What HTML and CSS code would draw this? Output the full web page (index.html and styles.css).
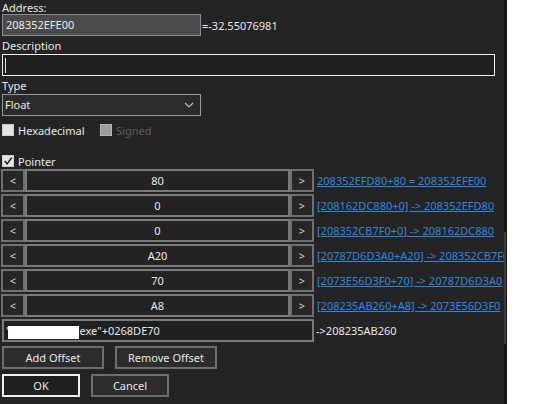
FILE: index.html
```html
<!DOCTYPE html>
<html>
<head>
<meta charset="utf-8">
<link rel="stylesheet" href="styles.css">
</head>
<body>
<div class="app">
  <div class="panel">
    <div class="label first">Address:</div>
    <div class="addr-row">
      <div class="field addr">208352EFE00</div>
      <span class="val">=-32.55076981</span>
    </div>
    <div class="label">Description</div>
    <div class="field desc"><span class="caret"></span></div>
    <div class="label">Type</div>
    <div class="field select">
      <span>Float</span>
      <svg class="chev" width="10" height="6" viewBox="0 0 10 6"><polyline points="1,1 5,5 9,1" fill="none" stroke="#bdbdbd" stroke-width="1.2"/></svg>
    </div>
    <div class="checks">
      <label class="check"><span class="box"></span>Hexadecimal</label>
      <label class="check disabled"><span class="box"></span>Signed</label>
    </div>
    <label class="check pointer"><span class="box checked"><svg width="12" height="12" viewBox="0 0 12 12"><polyline points="2,6 5,9.5 10.5,2" fill="none" stroke="#1a1a1a" stroke-width="1.8"/></svg></span>Pointer</label>
    <div class="offsets">
      <div class="orow"><div class="obtn">&lt;</div><div class="oval">80</div><div class="obtn">&gt;</div><a class="olink">208352EFD80+80 = 208352EFE00</a></div>
      <div class="orow"><div class="obtn">&lt;</div><div class="oval">0</div><div class="obtn">&gt;</div><a class="olink">[208162DC880+0] -&gt; 208352EFD80</a></div>
      <div class="orow"><div class="obtn">&lt;</div><div class="oval">0</div><div class="obtn">&gt;</div><a class="olink">[208352CB7F0+0] -&gt; 208162DC880</a></div>
      <div class="orow"><div class="obtn">&lt;</div><div class="oval">A20</div><div class="obtn">&gt;</div><a class="olink">[20787D6D3A0+A20] -&gt; 208352CB7F0</a></div>
      <div class="orow"><div class="obtn">&lt;</div><div class="oval">70</div><div class="obtn">&gt;</div><a class="olink">[2073E56D3F0+70] -&gt; 20787D6D3A0</a></div>
      <div class="orow"><div class="obtn">&lt;</div><div class="oval">A8</div><div class="obtn">&gt;</div><a class="olink">[208235AB260+A8] -&gt; 2073E56D3F0</a></div>
    </div>
    <div class="base-row">
      <div class="field base">'<span class="redact"></span>exe"+0268DE70</div>
      <span class="base-res">-&gt;208235AB260</span>
    </div>
    <div class="btn-row">
      <div class="btn wide">Add Offset</div>
      <div class="btn wide">Remove Offset</div>
    </div>
    <div class="btn-row last">
      <div class="btn narrow default">OK</div>
      <div class="btn narrow">Cancel</div>
    </div>
  </div>
  <div class="strip"><div class="strip-bar"></div></div>
  <div class="white"></div>
</div>
</body>
</html>
```
FILE: styles.css
```css
html, body {
  margin: 0;
  padding: 0;
  background: #ffffff;
}
body {
  font-family: "Noto Sans", "Open Sans", sans-serif;
  font-size: 11px;
  color: #e8e8e8;
}
.app {
  display: flex;
  width: 544px;
  height: 404px;
  overflow: hidden;
}
.panel {
  width: 502px;
  padding-left: 2px;
  background: #242424;
  display: flex;
  flex-direction: column;
  align-items: flex-start;
  overflow: hidden;
}
.strip {
  width: 3px;
  background: #141414;
  display: flex;
  flex-direction: column;
  padding-top: 232px;
}
.strip-bar {
  width: 2px;
  height: 112px;
  background: #3a3a3a;
}
.white {
  flex: 1;
  background: #ffffff;
}
.label {
  height: 18px;
  line-height: 20px;
  color: #e8e8e8;
  white-space: nowrap;
}
.label.first {
  height: 14px;
  line-height: 16px;
}
.field {
  box-sizing: border-box;
  height: 22px;
  border: 1px solid #8a8a8a;
  background: #1f1f1f;
  line-height: 20px;
  padding-left: 3px;
  white-space: nowrap;
  color: #e8e8e8;
}
.addr-row {
  display: flex;
  align-items: center;
}
.addr {
  width: 199px;
  background: #4a4a4a;
  border-color: #8c8c8c;
}
.val {
  padding-left: 1px;
}
.desc {
  width: 493px;
  border-color: #f0f0f0;
  display: flex;
  align-items: center;
  padding-left: 2px;
}
.caret {
  width: 1px;
  height: 15px;
  background: #e8e8e8;
}
.select {
  width: 199px;
  background: #2b2b2b;
  border-color: #9a9a9a;
  display: flex;
  align-items: center;
  justify-content: space-between;
  padding-left: 2px;
  padding-right: 6px;
}
.chev {
  display: block;
}
.checks {
  display: flex;
  margin-top: 7px;
  gap: 0;
}
.check {
  display: flex;
  align-items: center;
  height: 14px;
  white-space: nowrap;
}
.check .box {
  box-sizing: border-box;
  width: 12px;
  height: 12px;
  background: #e4e4e4;
  border: 1px solid #cfcfcf;
  margin-right: 4px;
  display: flex;
  align-items: center;
  justify-content: center;
}
.checks .check:first-child {
  width: 98px;
}
.check.disabled {
  color: #5e5e5e;
}
.check.disabled .box {
  background: #9b9b9b;
  border-color: #b5b5b5;
}
.pointer {
  margin-top: 17px;
}
.box svg {
  display: block;
}
.offsets {
  margin-top: 1px;
  margin-left: -1px;
  display: flex;
  flex-direction: column;
  gap: 2px;
}
.orow {
  display: flex;
  height: 23px;
  align-items: center;
}
.obtn, .oval {
  box-sizing: border-box;
  height: 23px;
  border: 2px solid #6f6f6f;
  display: flex;
  align-items: center;
  justify-content: center;
  background: #272727;
}
.obtn {
  width: 24px;
  font-size: 11px;
  color: #d8d8d8;
}
.oval {
  width: 265px;
  border-color: #7a7a7a;
  background: #232323;
  color: #e8e8e8;
}
.olink {
  margin-left: 3px;
  color: #2f87dd;
  text-decoration: underline;
  white-space: nowrap;
}
.base-row {
  margin-top: 2px;
  display: flex;
  align-items: center;
}
.base {
  width: 312px;
  height: 23px;
  border: 2px solid #7a7a7a;
  background: #1f1f1f;
  display: flex;
  align-items: center;
  padding-left: 2px;
}
.redact {
  display: inline-block;
  width: 71px;
  height: 13px;
  background: #ffffff;
  margin-top: 3px;
}
.base-res {
  margin-left: 2px;
}
.btn-row {
  display: flex;
  gap: 11px;
  margin-top: 4px;
}
.btn-row.last {
  margin-top: 5px;
}
.btn {
  box-sizing: border-box;
  height: 23px;
  border: 2px solid #6e6e6e;
  background: #2c2c2c;
  display: flex;
  align-items: center;
  justify-content: center;
  color: #e8e8e8;
  white-space: nowrap;
}
.btn.wide {
  width: 102px;
}
.btn.narrow {
  width: 78px;
}
.btn.default {
  border-color: #f0f0f0;
  background: #1f1f1f;
}
```
